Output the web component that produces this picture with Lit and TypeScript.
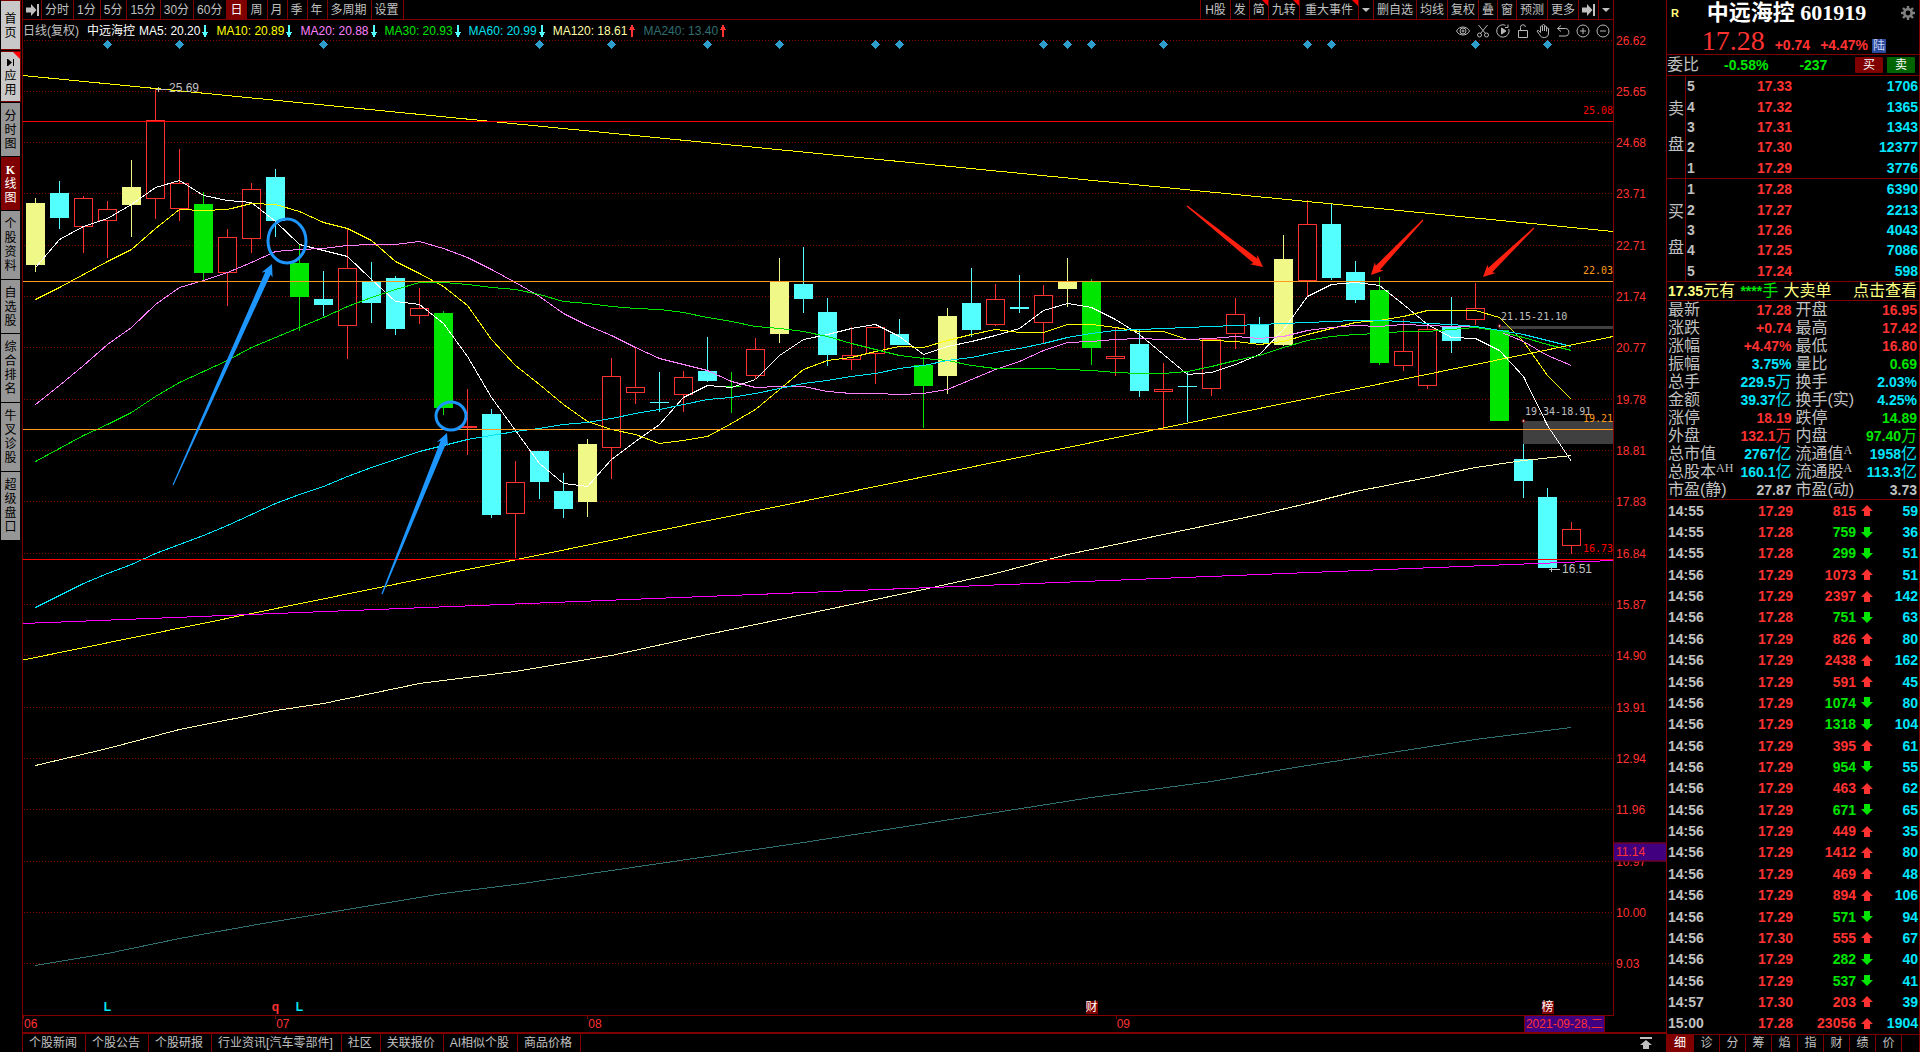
import { LitElement, html, svg, css } from "lit";
import { customElement } from "lit/decorators.js";
import { classMap } from "lit/directives/class-map.js";
import { styleMap } from "lit/directives/style-map.js";

const FIRST_X = 35.5;
const STEP = 24;
const PLOT = { x: 23, y: 20, w: 1590, h: 995 };
const barX = (i: number) => FIRST_X + STEP * i;
const leftPct = (x: number) => `${((x - PLOT.x) / PLOT.w) * 100}%`;
const topPct = (y: number) => `${((y - PLOT.y) / PLOT.h) * 100}%`;

type Kind = "R" | "C" | "Y" | "G";
type Candle = [Kind, number, number, number, number];

// kind, high, body top, body bottom, low
const CANDLES: Candle[] = [
  ["Y", 198, 203, 265, 272], ["C", 181, 193, 218, 229], ["R", 196, 198, 227, 253], ["R", 201, 209, 221, 258],
  ["Y", 160, 187, 205, 237], ["R", 89, 120, 199, 219], ["R", 149, 183, 209, 221], ["G", 192, 204, 273, 281],
  ["R", 229, 237, 273, 306], ["R", 183, 189, 239, 253], ["C", 169, 177, 221, 237], ["G", 245, 263, 297, 331],
  ["C", 271, 299, 305, 316], ["R", 229, 268, 326, 359], ["C", 262, 282, 303, 323], ["C", 276, 278, 329, 335],
  ["R", 288, 308, 316, 324], ["G", 311, 313, 408, 415], ["R", 389, 426, 428, 455], ["C", 409, 414, 515, 518],
  ["R", 461, 482, 514, 558], ["C", 451, 451, 482, 499], ["C", 473, 491, 509, 518], ["Y", 439, 444, 502, 517],
  ["R", 358, 376, 448, 479], ["R", 347, 387, 393, 404], ["C", 372, 402, 403, 412], ["R", 371, 377, 395, 412],
  ["C", 337, 371, 381, 382], ["G", 372, 386, 387, 413], ["R", 338, 349, 376, 379], ["Y", 258, 281, 334, 343],
  ["C", 247, 284, 299, 313], ["C", 298, 312, 355, 366], ["R", 327, 355, 360, 370], ["R", 327, 327, 354, 384],
  ["C", 319, 334, 345, 345], ["G", 357, 365, 386, 428], ["Y", 308, 316, 376, 394], ["C", 268, 303, 330, 337],
  ["R", 284, 299, 325, 326], ["C", 275, 307, 309, 313], ["R", 285, 295, 323, 344], ["Y", 258, 282, 289, 307],
  ["G", 279, 281, 348, 365], ["R", 327, 356, 359, 376], ["C", 329, 344, 391, 397], ["R", 363, 389, 392, 429],
  ["C", 372, 386, 387, 422], ["R", 338, 339, 389, 396], ["R", 298, 314, 334, 349], ["C", 317, 325, 343, 343],
  ["Y", 235, 259, 345, 346], ["R", 200, 224, 281, 296], ["C", 204, 224, 278, 280], ["C", 261, 272, 300, 303],
  ["G", 277, 290, 363, 365], ["R", 319, 351, 366, 371], ["R", 325, 329, 386, 389], ["C", 297, 326, 341, 353],
  ["R", 283, 308, 320, 325], ["G", 330, 330, 421, 421], ["C", 444, 459, 481, 498], ["C", 488, 497, 568, 568],
  ["R", 522, 529, 546, 554],
];

const MA5 = [267,239,226,218,204,187,180,195,200,202,221,244,250,256,279,301,304,323,356,397,430,463,483,486,459,441,424,397,385,387,379,355,339,334,328,324,336,354,346,341,335,328,310,303,307,319,334,354,374,372,364,354,329,296,284,282,285,304,324,337,338,350,376,425,461];
const MA10 = [299,287,274,261,249,228,209,210,209,203,204,211,222,228,240,261,273,286,305,339,365,384,404,421,429,434,443,440,436,423,409,389,369,360,357,351,346,347,340,334,329,332,332,324,324,327,331,331,339,340,341,344,341,334,328,322,320,316,310,310,310,317,341,375,399];
const MA20 = [404,385,365,344,327,304,287,280,272,262,251,249,248,245,244,244,241,248,257,269,282,296,313,325,335,347,358,364,370,381,387,386,386,391,393,393,394,393,389,379,369,361,350,342,341,339,338,339,339,338,336,338,336,330,327,325,326,324,325,326,326,331,341,355,365];
const MA30 = [461,448,435,424,412,396,382,371,360,347,337,327,317,306,297,289,282,282,284,287,289,294,301,303,306,308,309,312,317,321,326,328,331,336,343,349,355,358,360,365,368,368,368,369,370,372,373,373,371,366,360,355,347,340,336,334,333,331,331,329,327,331,337,344,350];
const MA60 = [607,595,583,573,564,553,544,535,525,514,503,494,486,476,467,459,451,445,439,435,431,428,424,422,418,413,409,404,399,397,393,388,383,380,376,373,368,365,360,357,352,348,343,337,333,330,329,328,327,326,325,324,323,322,321,320,320,321,323,324,326,330,334,340,346];
const MA120: [number, number][] = [[0,765],[3,748],[6,729],[10,710],[12,703],[16,683],[20,671],[24,655],[28,634],[32,614],[34,604],[37,589],[40,573],[43,554],[45,544],[48,529],[51,514],[53,503],[55,491],[58,477],[60,467],[62,460],[64,455]];
const MA240: [number, number][] = [[0,965],[3,953],[6,938],[9,925],[12,913],[17,893],[20,884],[24,870],[28,856],[32,842],[36,827],[40,812],[44,797],[49,781],[53,765],[60,739],[64,727]];

const dense = (ys: number[]) => ys.map((y, i) => `${barX(i)},${y + 0.5}`).join(" ");
const sparse = (pts: [number, number][]) => pts.map(([i, y]) => `${barX(i)},${y + 0.5}`).join(" ");

const GRID: [string, number, number][] = [
  ["26.62", 40, 41], ["25.65", 91, 92], ["24.68", 142, 143], ["23.71", 193, 194], ["22.71", 245, 246], ["21.74", 296, 297],
  ["20.77", 347, 348], ["19.78", 399, 400], ["18.81", 450, 451], ["17.83", 501, 502], ["16.84", 553, 554], ["15.87", 604, 605],
  ["14.90", 655, 656], ["13.91", 707, 708], ["12.94", 758, 759], ["11.96", 809, 810], ["10.97", 861, 862], ["10.00", 912, 913],
  ["9.03", 963, 964],
];

const EVENTS = [3, 6, 12, 21, 24, 28, 31, 35, 36, 42, 43, 44, 47, 53, 54, 60, 63];

// A tapering annotation arrow from the tail point to the tip point.
function taperedArrow(x1: number, y1: number, x2: number, y2: number, half = 5, len = 12) {
  const d = Math.hypot(x2 - x1, y2 - y1);
  const ux = (x2 - x1) / d, uy = (y2 - y1) / d;
  const at = (t: number, s: number) => `${(x1 + ux * t - uy * s).toFixed(1)},${(y1 + uy * t + ux * s).toFixed(1)}`;
  return [at(0, 0.6), at(d - len + 2, 3), at(d - len, half + 1), at(d, 0), at(d - len, -half - 1), at(d - len + 2, -3), at(0, -0.6)].join(" ");
}

const stepIcon = html`<svg width="13" height="12" viewBox="0 0 13 12" fill="currentColor" aria-hidden="true">
  <path d="M0 3.500H5V0L10.500 6L5 12V8.500H0ZM11 0H13V12H11Z"/></svg>`;
const caret = html`<svg width="8" height="4" viewBox="0 0 8 4" fill="currentColor" aria-hidden="true"><path d="M0 0H8L4 4Z"/></svg>`;
const thinArrow = (up: boolean) => html`<svg width="6" height="12" viewBox="0 0 6 12" fill="currentColor" shape-rendering="crispEdges" aria-hidden="true">
  ${up ? svg`<path d="M2 0H4V2H5V4H6V5H4V12H2V5H0V4H1V2H2Z"/>` : svg`<path d="M2 0H4V7H6V8H5V10H4V12H2V10H1V8H0V7H2Z"/>`}</svg>`;
const blockArrow = (up: boolean) => html`<svg width="12" height="11" viewBox="0 0 12 11" fill="currentColor" aria-hidden="true">
  ${up ? svg`<path d="M6 0L12 6H9V11H3V6H0Z"/>` : svg`<path d="M6 11L0 5H3V0H9V5H12Z"/>`}</svg>`;

@customElement("kline-chart")
export class KlineChart extends LitElement {
  static styles = css`
    :host { display: grid; grid-template-columns: minmax(0, 1fr) 52px; min-height: 0; }
    .plot { position: relative; border-right: 1px solid #800000; overflow: hidden; }
    .canvas { position: absolute; inset: 0; width: 100%; height: 100%; display: block; }
    .legend { position: relative; display: flex; align-items: center; gap: 8px; height: 21px; white-space: nowrap; line-height: 20px; }
    .names { display: flex; gap: 8px; margin-right: -4px; }
    .period { color: #c0c0c0; }
    .stock { color: #fff; }
    .ma { display: flex; align-items: center; gap: 2px; }
    .down { color: #54ffff; display: flex; }
    .up { color: #ff3232; display: flex; }
    .w { color: #fff; } .y { color: #ff0; } .m { color: #ff80ff; } .g { color: #00e600; }
    .c { color: #00e0f0; } .p { color: #ffffa8; } .t { color: #2f6f70; }
    .tools { margin-left: auto; display: flex; gap: 4px; padding-right: 2px; }
    .tools button { all: unset; width: 16px; height: 16px; color: #b8b8b8; display: flex; align-items: center; justify-content: center; }
    .tools svg { fill: none; stroke: currentColor; }
    .note { position: absolute; line-height: 14px; transform: translateY(-50%); white-space: nowrap; color: #c0c0c0; }
    .mono { font: 10px/14px "DejaVu Sans Mono", monospace; }
    .edge { left: auto; right: 0; }
    .red { color: #f00; } .orange { color: #ff9a1e; }
    .flag { position: absolute; transform: translateX(-50%); bottom: 1px; font-weight: bold; line-height: 14px; }
    .flag.box { background: #800000; color: #fff; font-weight: normal; line-height: 13px; }
    .flag.L { color: #00e6f0; } .flag.q { color: #ff3232; }
    .axis { position: relative; color: #ff3232; overflow: hidden; }
    .tick { position: absolute; left: 2px; line-height: 14px; transform: translateY(-50%); }
    .cursor { position: absolute; left: 0; right: 0; padding-left: 2px; line-height: 17px; background: #400080; border: solid #800000; border-width: 1px 0; transform: translateY(-50%); }
  `;

  private line(points: string, color: string) {
    return svg`<polyline points=${points} fill="none" stroke=${color}/>`;
  }

  private candle([kind, hi, top, bot, lo]: Candle, i: number) {
    const x = barX(i);
    const color = { R: "#ff3232", C: "#54ffff", Y: "#f0f888", G: "#00e600" }[kind];
    return svg`<path d="M${x} ${hi}V${lo}" stroke=${color}/>
      ${kind === "R"
        ? svg`<rect x=${x - 9} y=${top + 0.5} width="18" height=${Math.max(1, bot - top - 1)} fill="#000" stroke=${color}/>`
        : svg`<rect x=${x - 9.5} y=${top} width="19" height=${bot - top} fill=${color}/>`}`;
  }

  private legendItem(name: string, value: string, cls: string, up = false) {
    return html`<span class="ma"><span class=${cls}>${name}: ${value}</span><span class=${up ? "up" : "down"}>${thinArrow(up)}</span></span>`;
  }

  private note(text: string, x: number, y: number, cls = "") {
    return html`<span class="note ${cls}" style=${styleMap({ left: leftPct(x), top: topPct(y) })}>${text}</span>`;
  }

  private level(text: string, y: number, cls: string) {
    return html`<span class="note mono edge ${cls}" style=${styleMap({ top: topPct(y) })}>${text}</span>`;
  }

  private flag(text: string, i: number, cls: string) {
    return html`<span class="flag ${cls}" style=${styleMap({ left: leftPct(barX(i)) })}>${text}</span>`;
  }

  render() {
    return html`
      <div class="plot">
        <svg class="canvas" viewBox="${PLOT.x} ${PLOT.y} ${PLOT.w} ${PLOT.h}" preserveAspectRatio="none" role="img" aria-label="日线">
          <g shape-rendering="crispEdges">
            ${GRID.map(([, y]) => svg`<path d="M24 ${y + 0.5}H1613" stroke="#800000" stroke-dasharray="1 2"/>`)}
            <rect x="1499" y="326" width="114" height="3" fill="#404040"/>
            <rect x="1523" y="421" width="90" height="23" fill="#404040"/>
            ${CANDLES.map((c, i) => this.candle(c, i))}
            ${this.line(dense(MA5), "#ffffff")}
            ${this.line(dense(MA10), "#ffff00")}
            ${this.line(dense(MA20), "#ff80ff")}
            ${this.line(dense(MA30), "#00e600")}
            ${this.line(dense(MA60), "#00e6f8")}
            ${this.line(sparse(MA120), "#ffffb4")}
            ${this.line(sparse(MA240), "#2f6f70")}
            ${this.line("23,75.5 1613,231.5", "#ffff00")}
            ${this.line("23,660 1613,336.5", "#ffff00")}
            ${this.line("23,623.5 1613,560.5", "#ff00ff")}
            <path d="M23 121.5H1613M23 559.5H1613" stroke="#ff0000"/>
            <path d="M23 281.5H1613M23 429.5H1613" stroke="#ff9a1e"/>
            ${EVENTS.map((i) => svg`<path d="M${barX(i)} 40L${barX(i) + 4.5} 44.5L${barX(i)} 49L${barX(i) - 4.5} 44.5Z" fill="#2d9cc8"/>`)}
            <path d="M156 89.5H167M158.5 87V92M1549 569.5H1560M1551.5 567V572" stroke="#c0c0c0"/>
          </g>
          <g fill="#c0c0c0" stroke="#800000">
            <circle cx="1499.5" cy="326" r="1.5"/><circle cx="1523.5" cy="421" r="1.5"/>
          </g>
          <g fill="none" stroke="#1e96ff" stroke-width="3">
            <ellipse cx="287" cy="241" rx="19" ry="22"/><ellipse cx="451" cy="416" rx="15" ry="14"/>
          </g>
          <g fill="#1e96ff">
            <polygon points=${taperedArrow(173, 485, 272, 264)}/>
            <polygon points=${taperedArrow(382, 594, 447, 433)}/>
          </g>
          <g fill="#ff2010">
            <polygon points=${taperedArrow(1187, 206, 1263, 267)}/>
            <polygon points=${taperedArrow(1423, 220, 1371, 275)}/>
            <polygon points=${taperedArrow(1534, 228, 1483, 277)}/>
          </g>
        </svg>
        <div class="legend">
          <span class="names"><span class="period">日线(复权)</span><span class="stock">中远海控</span></span>
          ${this.legendItem("MA5", "20.20", "w")} ${this.legendItem("MA10", "20.89", "y")}
          ${this.legendItem("MA20", "20.88", "m")} ${this.legendItem("MA30", "20.93", "g")}
          ${this.legendItem("MA60", "20.99", "c")} ${this.legendItem("MA120", "18.61", "p", true)}
          ${this.legendItem("MA240", "13.40", "t", true)}
          <div class="tools">
            <button aria-label="显示"><svg width="14" height="14" viewBox="0 0 14 14"><path d="M.5 7C3 1.7 11 1.7 13.500 7C11 12.300 3 12.300 .5 7Z"/><circle cx="7" cy="7" r="3"/><circle cx="7" cy="7" r="1"/></svg></button>
            <button aria-label="剪切"><svg width="14" height="14" viewBox="0 0 14 14"><path d="M2.500 1L9.500 9.500M11.500 1L4.500 9.500"/><circle cx="3.500" cy="11" r="2"/><circle cx="10.500" cy="11" r="2"/></svg></button>
            <button aria-label="回放"><svg width="14" height="14" viewBox="0 0 14 14"><path d="M12.800 5A6.200 6.200 0 1 1 9.500 1.300M9 3.500L12 3.500L12 .5"/><path d="M5.500 4V10L10 7Z" fill="currentColor"/></svg></button>
            <button aria-label="锁定"><svg width="14" height="14" viewBox="0 0 14 14"><path d="M2.500 6.500H11.500V13.500H2.500ZM4.500 6.500V3.500A2.500 2.500 0 0 1 9.500 3"/></svg></button>
            <button aria-label="拖动"><svg width="14" height="14" viewBox="0 0 14 14"><path d="M4.500 8.500V3A1 1 0 0 1 6.500 3V7M6.500 6V1.500A1 1 0 0 1 8.500 1.500V7M8.500 3A1 1 0 0 1 10.500 3V7.500M10.500 5A1 1 0 0 1 12.500 5V9C12.500 12 11 13.500 8.500 13.500C5.500 13.500 4.500 12.500 3.500 10.500L1 7C1.500 6 2.500 6.200 3 6.800L4.500 8.500"/></svg></button>
            <button aria-label="撤销"><svg width="14" height="14" viewBox="0 0 14 14"><path d="M5 1.500L1.500 4.500L5 7.500M1.500 4.500H9.500C14 4.500 14 12 9.500 12H3"/></svg></button>
            <button aria-label="放大"><svg width="14" height="14" viewBox="0 0 14 14"><circle cx="7" cy="7" r="6"/><path d="M4 7H10M7 4V10"/></svg></button>
            <button aria-label="缩小"><svg width="14" height="14" viewBox="0 0 14 14"><circle cx="7" cy="7" r="6"/><path d="M4 7H10"/></svg></button>
          </div>
        </div>
        ${this.note("25.69", 169, 88)} ${this.note("16.51", 1562, 569)}
        ${this.note("21.15-21.10", 1501, 317, "mono")} ${this.note("19.34-18.91", 1525, 412, "mono")}
        ${this.level("25.08", 111, "red")} ${this.level("22.03", 271, "orange")}
        ${this.level("19.21", 419, "orange")} ${this.level("16.73", 549, "red")}
        ${this.flag("L", 3, "L")} ${this.flag("q", 10, "q")} ${this.flag("L", 11, "L")}
        ${this.flag("财", 44, "box")} ${this.flag("榜", 63, "box")}
      </div>
      <div class="axis">
        ${GRID.map(([text, , y]) => html`<span class="tick" style=${styleMap({ top: topPct(y) })}>${text}</span>`)}
        <span class="cursor" style=${styleMap({ top: topPct(852) })}>11.14</span>
      </div>`;
  }
}

type Cell = [string, string];
const STATS: [string, string, string, string, string, string][] = [
  ["最新", "17.28", "r", "开盘", "16.95", "r"],
  ["涨跌", "+0.74", "r", "最高", "17.42", "r"],
  ["涨幅", "+4.47%", "r", "最低", "16.80", "r"],
  ["振幅", "3.75%", "c", "量比", "0.69", "g"],
  ["总手", "229.5万", "c", "换手", "2.03%", "c"],
  ["金额", "39.37亿", "c", "换手(实)", "4.25%", "c"],
  ["涨停", "18.19", "r", "跌停", "14.89", "g"],
  ["外盘", "132.1万", "r", "内盘", "97.40万", "g"],
  ["总市值", "2767亿", "c", "流通值^A", "1958亿", "c"],
  ["总股本^AH", "160.1亿", "c", "流通股^A", "113.3亿", "c"],
  ["市盈(静)", "27.87", "n", "市盈(动)", "3.73", "n"],
];
const SELL: Cell[] = [["17.33", "1706"], ["17.32", "1365"], ["17.31", "1343"], ["17.30", "12377"], ["17.29", "3776"]];
const BUY: Cell[] = [["17.28", "6390"], ["17.27", "2213"], ["17.26", "4043"], ["17.25", "7086"], ["17.24", "598"]];
const TICKS: [string, string, string, boolean, string][] = [
  ["14:55", "17.29", "815", true, "59"], ["14:55", "17.28", "759", false, "36"], ["14:55", "17.28", "299", false, "51"],
  ["14:56", "17.29", "1073", true, "51"], ["14:56", "17.29", "2397", true, "142"], ["14:56", "17.28", "751", false, "63"],
  ["14:56", "17.29", "826", true, "80"], ["14:56", "17.29", "2438", true, "162"], ["14:56", "17.29", "591", true, "45"],
  ["14:56", "17.29", "1074", false, "80"], ["14:56", "17.29", "1318", false, "104"], ["14:56", "17.29", "395", true, "61"],
  ["14:56", "17.29", "954", false, "55"], ["14:56", "17.29", "463", true, "62"], ["14:56", "17.29", "671", false, "65"],
  ["14:56", "17.29", "449", true, "35"], ["14:56", "17.29", "1412", true, "80"], ["14:56", "17.29", "469", true, "48"],
  ["14:56", "17.29", "894", true, "106"], ["14:56", "17.29", "571", false, "94"], ["14:56", "17.30", "555", true, "67"],
  ["14:56", "17.29", "282", false, "40"], ["14:56", "17.29", "537", false, "41"], ["14:57", "17.30", "203", true, "39"],
  ["15:00", "17.28", "23056", true, "1904"],
];

@customElement("quote-panel")
export class QuotePanel extends LitElement {
  static styles = css`
    :host { display: flex; flex-direction: column; min-height: 0; border: solid #800000; border-width: 0 1px; font-size: 14px; color: #c0c0c0; }
    button { all: unset; text-align: center; box-sizing: border-box; }
    .head { height: 55px; box-sizing: border-box; border-bottom: 1px solid #800000; }
    .title { display: flex; align-items: center; height: 26px; padding: 0 4px; }
    .mark { color: #ffff80; font-size: 11px; font-weight: bold; }
    h1 { margin: 0; flex: 1; padding-right: 7px; text-align: center; color: #fff; font: bold 22px/26px "Liberation Serif", "Noto Sans CJK SC", serif; white-space: nowrap; }
    .gear { display: flex; color: #808080; }
    .price { display: flex; align-items: baseline; justify-content: flex-end; gap: 10px; height: 28px; padding: 1px 33px 0 0; color: #ff3232; font-weight: bold; line-height: 28px; }
    .last { font: 28px/28px "Liberation Serif", serif; }
    .badge { margin-left: -6px; width: 14px; line-height: 14px; background: #2b4a9c; color: #c8d4f4; font-size: 12px; font-weight: normal; text-align: center; }
    .ratio { display: flex; align-items: center; height: 21px; box-sizing: border-box; border-bottom: 1px solid #800000; font-weight: bold; }
    .ratio .pct { margin-left: 25px; }
    .ratio .diff { margin-left: 31px; margin-right: auto; }
    .cjk { font-size: 16px; font-weight: normal; }
    .trade { width: 28px; height: 16px; line-height: 16px; margin-right: 4px; font-size: 12px; font-weight: normal; color: #fff; border-radius: 1px; }
    .buy { background: #800000; } .sell { background: #006400; }
    .r { color: #ff3232; } .g { color: #00e600; } .c { color: #00e6ff; } .n { color: #c0c0c0; }
    table { border-collapse: collapse; width: 100%; table-layout: fixed; font-weight: bold; }
    td, th { padding: 0; line-height: 18px; text-align: right; white-space: nowrap; }
    .book { height: 103px; border-bottom: 1px solid #800000; }
    .book th { width: 18px; border-right: 1px solid #800000; font-size: 16px; font-weight: normal; line-height: 36px; text-align: center; white-space: normal; }
    .book .lv { width: 12px; text-align: left; padding-left: 1px; }
    .book .px { width: 93px; }
    .book .qty { padding-right: 1px; }
    .alert { display: flex; justify-content: space-between; align-items: center; height: 19px; box-sizing: border-box; border-bottom: 1px solid #800000; color: #ffff80; font-size: 16px; line-height: 18px; padding: 0 2px 0 1px; white-space: nowrap; }
    .alert b { font-size: 14px; }
    .alert .more { margin-left: 16px; }
    .alert a { color: inherit; text-decoration: none; }
    .stats { border-bottom: 1px solid #800000; }
    .stats tr { height: 18px; }
    .stats th { width: 62px; text-align: left; font-size: 16px; font-weight: normal; padding-left: 1px; }
    .stats th + td + th { padding-left: 4px; width: 62px; }
    .stats td:last-child { padding-right: 2px; }
    .u { font-size: 16px; font-weight: normal; line-height: 0; }
    .exp { font-family: "Liberation Serif", serif; font-size: 12px; vertical-align: 5px; line-height: 0; }
    .ticks { flex: 1; min-height: 0; display: flex; }
    .ticks table { height: 100%; }
    .ticks .time { width: 38px; text-align: left; padding-left: 1px; }
    .ticks .tp { width: 87px; }
    .ticks .tv { width: 63px; }
    .ticks .ta { width: 17px; }
    .ticks .ta svg { display: block; margin-left: auto; }
    .ticks .tc { padding-right: 1px; }
    .tabs { display: flex; height: 18px; box-sizing: border-box; border-top: 1px solid #800000; font-size: 12px; }
    .tabs button { width: 26px; line-height: 17px; border-right: 1px solid #800000; color: #c0c0c0; }
    .tabs .on { width: 27px; background: #800000; color: #fff; }
  `;

  private book(name: string, rows: Cell[], levels: number[]) {
    return html`<table class="book"><tbody>
      ${rows.map(([px, qty], i) => html`<tr>
        ${i === 0 ? html`<th rowspan="5" scope="rowgroup">${name[0]}<br>${name[1]}</th>` : null}
        <td class="lv">${levels[i]}</td><td class="px r">${px}</td><td class="qty c">${qty}</td></tr>`)}
    </tbody></table>`;
  }

  private label(text: string) {
    const [base, exp] = text.split("^");
    return html`<th scope="row">${base}${exp ? html`<span class="exp">${exp}</span>` : null}</th>`;
  }

  private value(text: string, cls: string) {
    const unit = /[万亿]$/.test(text) ? text.slice(-1) : "";
    const num = unit ? text.slice(0, -1) : text;
    return html`<td class=${cls}>${num}${unit ? html`<span class="u">${unit}</span>` : null}</td>`;
  }

  render() {
    return html`
      <header class="head">
        <div class="title">
          <span class="mark">R</span>
          <h1>中远海控 601919</h1>
          <button class="gear" aria-label="设置"><svg width="14" height="14" viewBox="0 0 14 14" aria-hidden="true">
            <circle cx="7" cy="7" r="3.700" fill="none" stroke="currentColor" stroke-width="2.600"/>
            <path d="M7 0V3M7 11V14M0 7H3M11 7H14M2 2L4 4M10 10L12 12M12 2L10 4M4 10L2 12" stroke="currentColor" stroke-width="2.400"/></svg></button>
        </div>
        <div class="price"><span class="last">17.28</span><span>+0.74</span><span>+4.47%</span><span class="badge">陆</span></div>
      </header>
      <div class="ratio">
        <span class="cjk">委比</span><span class="pct g">-0.58%</span><span class="diff g">-237</span>
        <button class="trade buy">买</button><button class="trade sell">卖</button>
      </div>
      ${this.book("卖盘", SELL, [5, 4, 3, 2, 1])}
      ${this.book("买盘", BUY, [1, 2, 3, 4, 5])}
      <div class="alert">
        <span><b>17.35</b>元有</span><span class="g"><b>****</b>手</span><span>大卖单</span><a class="more" href="#detail">点击查看</a>
      </div>
      <table class="stats"><tbody>
        ${STATS.map(([a, av, ac, b, bv, bc]) => html`<tr>${this.label(a)}${this.value(av, ac)}${this.label(b)}${this.value(bv, bc)}</tr>`)}
      </tbody></table>
      <div class="ticks"><table><tbody>
        ${TICKS.map(([t, p, v, up, n]) => html`<tr><td class="time">${t}</td><td class="tp r">${p}</td>
          <td class="tv ${up ? "r" : "g"}">${v}</td><td class="ta ${up ? "r" : "g"}">${blockArrow(up)}</td><td class="tc c">${n}</td></tr>`)}
      </tbody></table></div>
      <nav class="tabs">${["细", "诊", "分", "筹", "焰", "指", "财", "绩", "价"].map((t, i) => html`<button class=${classMap({ on: i === 0 })}>${t}</button>`)}</nav>`;
  }
}

const SIDE: [string, string][] = [
  ["首页", "light home"], ["应用", "light app"], ["分时图", ""], ["K线图", "on"], ["个股资料", "tall"],
  ["自选股", ""], ["综合排名", "tall"], ["牛叉诊股", "tall"], ["超级盘口", "tall"],
];
const PERIODS = ["分时", "1分", "5分", "15分", "30分", "60分", "日", "周", "月", "季", "年", "多周期", "设置"];
const ACTIONS: [string, string][] = [
  ["H股", "h"], ["发", ""], ["简", "new"], ["九转", "new"], ["重大事件", "new wide"], ["▾", ""], ["删自选", ""], ["均线", ""],
  ["复权", ""], ["叠", ""], ["窗", ""], ["预测", ""], ["更多", ""], ["→", ""], ["▾", ""],
];
const FEEDS = ["个股新闻", "个股公告", "个股研报", "行业资讯[汽车零部件]", "社区", "关联报价", "AI相似个股", "商品价格"];
const MONTHS: [string, number][] = [["06", 23], ["07", 275], ["08", 587], ["09", 1115]];

@customElement("app-root")
export class AppRoot extends LitElement {
  static styles = css`
    :host { display: grid; grid-template-columns: 22px minmax(0, 1fr) 254px; height: 100vh; background: #000; overflow: hidden;
      font: 12px/14px "Liberation Sans", "Noto Sans CJK SC", sans-serif; color: #c0c0c0; }
    button { all: unset; box-sizing: border-box; }
    .side { display: flex; flex-direction: column; align-items: flex-start; gap: 1px; padding-left: 1px; }
    .side button { position: relative; width: 19px; padding: 6px 3px 5px; background: #969696; color: #000; line-height: 14px; text-align: center; word-break: break-all; }
    .side .tall { padding: 6px 3px; }
    .side .light { width: 20px; background: #c8c8c8; border: 1px solid #800000; border-left: 0; }
    .side .home { padding: 11px 3px 9px; }
    .side .app { padding: 4px 3px; }
    .side .app svg { display: block; margin: 2px auto 2px; }
    .side .app::after { content: ""; position: absolute; top: 0; right: 0; border: solid transparent; border-width: 0 7px 7px 0; border-right-color: #f00; }
    .side .on { background: #800000; color: #fff; }
    .side .on b { font-family: "Liberation Serif", serif; }
    .main { display: grid; grid-template-rows: 20px minmax(0, 1fr) 17px 20px; border-left: 1px solid #800000; min-width: 0; }
    .bar { display: flex; justify-content: space-between; margin-right: 52px; border-bottom: 1px solid #800000; border-right: 1px solid #800000; }
    .group { display: flex; }
    .group button { position: relative; display: flex; align-items: center; justify-content: center; white-space: nowrap; line-height: 18px; padding: 1px 4px 0 3px; border-right: 1px solid #800000; }
    .group .on { background: #800000; color: #fff; }
    .group .step { padding: 1px 2px 0 3px; }
    .group.right button { padding: 1px 3px 0; border-right: 0; border-left: 1px solid #800000; }
    .group.right .h { padding: 1px 4px 0; }
    .group.right .wide { padding: 1px 5px 0; }
    .new::after { content: ""; position: absolute; top: 0; right: 0; border: solid transparent; border-width: 0 6px 6px 0; border-right-color: #f00; }
    .dates { position: relative; margin-right: 52px; border-top: 1px solid #800000; color: #ff3232; }
    .month { position: absolute; top: 0; padding-left: 1px; line-height: 16px; }
    .month::before { content: ""; position: absolute; left: 0; top: 0; width: 1px; height: 3px; background: #800000; }
    .today { position: absolute; top: 0; padding: 0 1px; line-height: 16px; background: #400080; border: solid #800000; border-width: 0 1px; white-space: nowrap; }
    .feeds { display: flex; border-top: 2px solid #800000; }
    .feeds button { padding: 0 8px 0 6px; line-height: 18px; white-space: nowrap; border-right: 1px solid #800000; }
    .feeds .top { margin-left: auto; display: flex; align-items: center; padding: 0 14px 0 0; border: 0; }
  `;

  private action(text: string) {
    return text === "▾" ? caret : text === "→" ? stepIcon : text;
  }

  private side(text: string, cls: string) {
    const icon = cls.includes("app")
      ? html`<svg width="8" height="9" viewBox="0 0 8 9" aria-hidden="true"><path d="M0 1H1V8H0ZM1 1L5 4.500L1 8ZM6 1H7V8H6Z"/></svg>` : null;
    return html`<button class=${cls}>${icon}${text[0] === "K" ? html`<b>K</b><br>${text.slice(1)}` : text}</button>`;
  }

  render() {
    return html`
      <nav class="side">${SIDE.map(([t, c]) => this.side(t, c))}</nav>
      <main class="main">
        <div class="bar">
          <div class="group">
            <button class="step" aria-label="展开">${stepIcon}</button>
            ${PERIODS.map((t) => html`<button class=${classMap({ on: t === "日" })}>${t}</button>`)}
          </div>
          <div class="group right">${ACTIONS.map(([t, c]) => html`<button class=${c}>${this.action(t)}</button>`)}</div>
        </div>
        <kline-chart></kline-chart>
        <div class="dates">
          ${MONTHS.map(([t, x]) => html`<span class="month" style=${styleMap({ left: leftPct(x) })}>${t}</span>`)}
          <span class="today" style=${styleMap({ left: leftPct(1523) })}>2021-09-28,二</span>
        </div>
        <div class="feeds">
          ${FEEDS.map((t) => html`<button>${t}</button>`)}
          <button class="top" aria-label="展开资讯"><svg width="12" height="12" viewBox="0 0 12 12" fill="currentColor" aria-hidden="true"><path d="M0 0H12V2H0ZM6 3L12 8H9V12H3V8H0Z"/></svg></button>
        </div>
      </main>
      <quote-panel></quote-panel>`;
  }
}
